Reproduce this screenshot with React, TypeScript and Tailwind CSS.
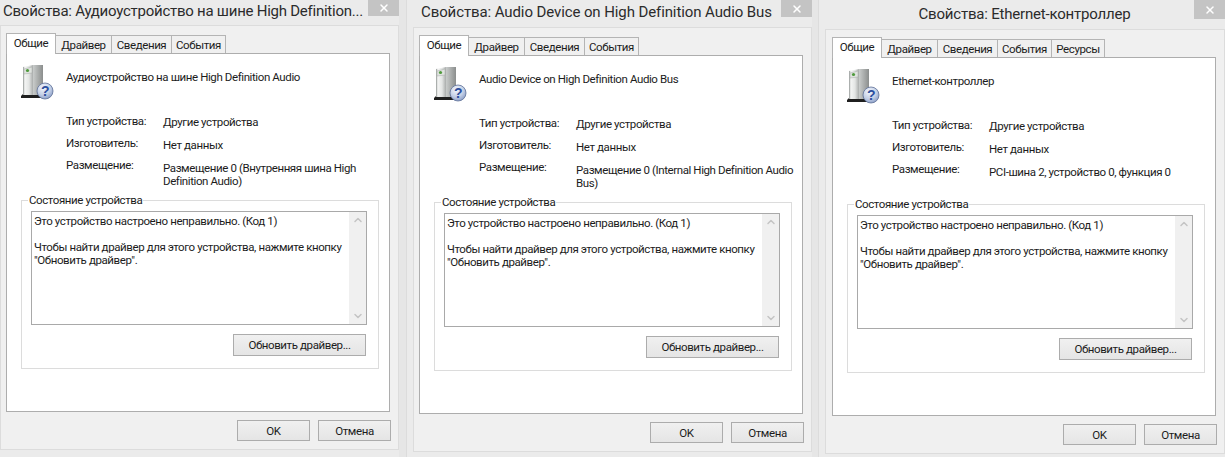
import { ChevronDown, ChevronUp, X } from "lucide-react";

type DeviceWindowProps = {
  title: string;
  name: string;
  location: string[];
  tabs: string[];
  shellClass: string;
  titleBarClass: string;
  titleClass: string;
  closeClass: string;
  frameClass: string;
};

const tabWidths = ["w-[50px]", "w-[57px]", "w-[61px]", "w-[55px]", "w-[54px]"];

// generic "unknown device" tower with the blue question badge
const DeviceIcon = () => (
  <svg width="34" height="36" viewBox="0 0 34 36" className="shrink-0">
    <defs>
      <linearGradient id="tower" x1="0" y1="0" x2="1" y2="0">
        <stop offset="0" stopColor="#8f9492" />
        <stop offset="0.18" stopColor="#f4f5f4" />
        <stop offset="0.6" stopColor="#e3e5e4" />
        <stop offset="1" stopColor="#a9acab" />
      </linearGradient>
      <linearGradient id="towerSide" x1="0" y1="0" x2="1" y2="0">
        <stop offset="0" stopColor="#c9cccb" />
        <stop offset="1" stopColor="#8b8e8d" />
      </linearGradient>
      <radialGradient id="badge" cx="0.4" cy="0.3" r="0.8">
        <stop offset="0" stopColor="#f4f7fc" />
        <stop offset="0.55" stopColor="#c3cfe6" />
        <stop offset="1" stopColor="#7d92bf" />
      </radialGradient>
    </defs>
    <path d="M1 32 L3 30 H24 L26 32 V34 H1 Z" fill="#1f1f1f" />
    <path d="M3 3 L13 1 V31 L3 31 Z" fill="url(#tower)" />
    <path d="M13 1 L23 1 V31 L13 31 Z" fill="url(#towerSide)" />
    <path d="M4 5 L12 3 V9 L4 10 Z" fill="#dfe3df" stroke="#a5a9a6" strokeWidth="0.5" />
    <circle cx="7.5" cy="6.5" r="1.6" fill="#4f9a3c" />
    <circle cx="25" cy="27" r="8" fill="url(#badge)" stroke="#5d6f96" strokeWidth="0.8" />
    <text x="25" y="32" textAnchor="middle" fontSize="14" fontWeight="700" fontFamily="Liberation Sans, sans-serif" fill="#2c4f9e">
      ?
    </text>
  </svg>
);

const DeviceWindow = ({
  title,
  name,
  location,
  tabs,
  shellClass,
  titleBarClass,
  titleClass,
  closeClass,
  frameClass,
}: DeviceWindowProps) => (
  <div className={`flex shrink-0 flex-col bg-[#ebebeb] ${shellClass}`}>
    <div className={`flex items-start ${titleBarClass}`}>
      <div className={`min-w-0 flex-1 whitespace-nowrap text-[15px] text-[#2b2b2b] ${titleClass}`}>{title}</div>
      <div className={`flex w-[31px] shrink-0 items-center justify-center bg-[#c4c4c4] text-white ${closeClass}`}>
        <X size={12} strokeWidth={3} />
      </div>
    </div>

    <div className={`border border-[#dcdcdc] bg-[#f0f0f0] pt-[7px] pr-[8px] pb-[8px] ${frameClass}`}>
      <div className="flex h-[20px] items-end">
        {tabs.map((tab, i) => (
          <div
            key={tab}
            className={
              i === 0
                ? `relative z-10 -mb-px flex h-[21px] items-start justify-center border border-b-0 border-[#b4b4b4] bg-white pt-[1px] ${tabWidths[i]}`
                : `-ml-px flex h-[18px] items-center justify-center border border-b-0 border-[#b4b4b4] bg-[#f0f0f0] ${tabWidths[i]}`
            }
          >
            {tab}
          </div>
        ))}
      </div>

      <div className="h-[359px] w-[384px] border border-[#adadad] bg-white pt-[10px]">
        <div className="flex h-[49px] pl-[13px]">
          <DeviceIcon />
          <div className="ml-[12px] mt-[5px]">{name}</div>
        </div>

        <div className="flex h-[79px] pl-[59px]">
          <div className="flex w-[97px] shrink-0 flex-col gap-[6px] whitespace-nowrap">
            <div>Тип устройства:</div>
            <div>Изготовитель:</div>
            <div>Размещение:</div>
          </div>
          <div className="flex flex-col gap-[7px] whitespace-nowrap pt-px">
            <div>Другие устройства</div>
            <div>Нет данных</div>
            <div className="pt-[2px] leading-[13px]">
              {location.map((line) => (
                <div key={line}>{line}</div>
              ))}
            </div>
          </div>
        </div>

        <fieldset className="ml-[14px] h-[177px] w-[358px] border border-[#dcdcdc] pl-[9px]">
          <legend className="-ml-[3px] px-px">Состояние устройства</legend>
          <div className="mt-[3px] flex h-[114px] w-[336px] border border-[#a9a9a9] bg-white">
            <div className="flex-1 whitespace-nowrap pl-[2px] pt-[3px] leading-[13px]">
              <div>Это устройство настроено неправильно. (Код 1)</div>
              <div className="mt-[13px]">Чтобы найти драйвер для этого устройства, нажмите кнопку</div>
              <div>"Обновить драйвер".</div>
            </div>
            <div className="flex w-[17px] flex-col items-center justify-between bg-[#f0f0f0] py-[2px] text-[#c4c4c4]">
              <ChevronUp size={12} strokeWidth={3} />
              <ChevronDown size={12} strokeWidth={3} />
            </div>
          </div>
          <div className="mr-[12px] mt-[9px] flex justify-end">
            <button className="h-[22px] w-[133px] border border-[#acacac] bg-gradient-to-b from-[#f0f0f0] to-[#e5e5e5]">
              Обновить драйвер...
            </button>
          </div>
        </fieldset>
      </div>

      <div className="-mr-px mt-[8px] flex justify-end gap-[8px]">
        <button className="h-[21px] w-[73px] border border-[#acacac] bg-gradient-to-b from-[#f0f0f0] to-[#e5e5e5]">
          OK
        </button>
        <button className="h-[21px] w-[73px] border border-[#acacac] bg-gradient-to-b from-[#f0f0f0] to-[#e5e5e5]">
          Отмена
        </button>
      </div>
    </div>
  </div>
);

export default function App() {
  const baseTabs = ["Общие", "Драйвер", "Сведения", "События"];

  return (
    <div className="flex h-[457px] w-[1225px] overflow-hidden bg-[#e6e6e6] font-['Roboto',sans-serif] text-[11.5px] leading-[16px] tracking-[-0.4px] text-[#1c1c1c]">
      <DeviceWindow
        title="Свойства: Аудиоустройство на шине High Definition..."
        name="Аудиоустройство на шине High Definition Audio"
        location={["Размещение 0 (Внутренняя шина High", "Definition Audio)"]}
        tabs={baseTabs}
        shellClass="w-[399px]"
        titleBarClass="h-[25px]"
        titleClass="pl-[3px] pt-[3px] tracking-[-0.25px]"
        closeClass="h-[16px]"
        frameClass="pl-[5px]"
      />
      <DeviceWindow
        title="Свойства: Audio Device on High Definition Audio Bus"
        name="Audio Device on High Definition Audio Bus"
        location={["Размещение 0 (Internal High Definition Audio", "Bus)"]}
        tabs={baseTabs}
        shellClass="ml-[7px] w-[406px] border-l border-[#dcdcdc] pl-[6px]"
        titleBarClass="h-[27px]"
        titleClass="pl-[8px] pt-[4px] tracking-[-0.1px]"
        closeClass="h-[17px]"
        frameClass="pl-[5px]"
      />
      <DeviceWindow
        title="Свойства: Ethernet-контроллер"
        name="Ethernet-контроллер"
        location={["PCI-шина 2, устройство 0, функция 0"]}
        tabs={[...baseTabs, "Ресурсы"]}
        shellClass="ml-[6px] w-[407px] border-l border-[#dcdcdc] pl-[6px]"
        titleBarClass="h-[29px]"
        titleClass="pl-[30px] pt-[6px] text-center tracking-[-0.2px]"
        closeClass="h-[19px]"
        frameClass="pl-[6px]"
      />
    </div>
  );
}
